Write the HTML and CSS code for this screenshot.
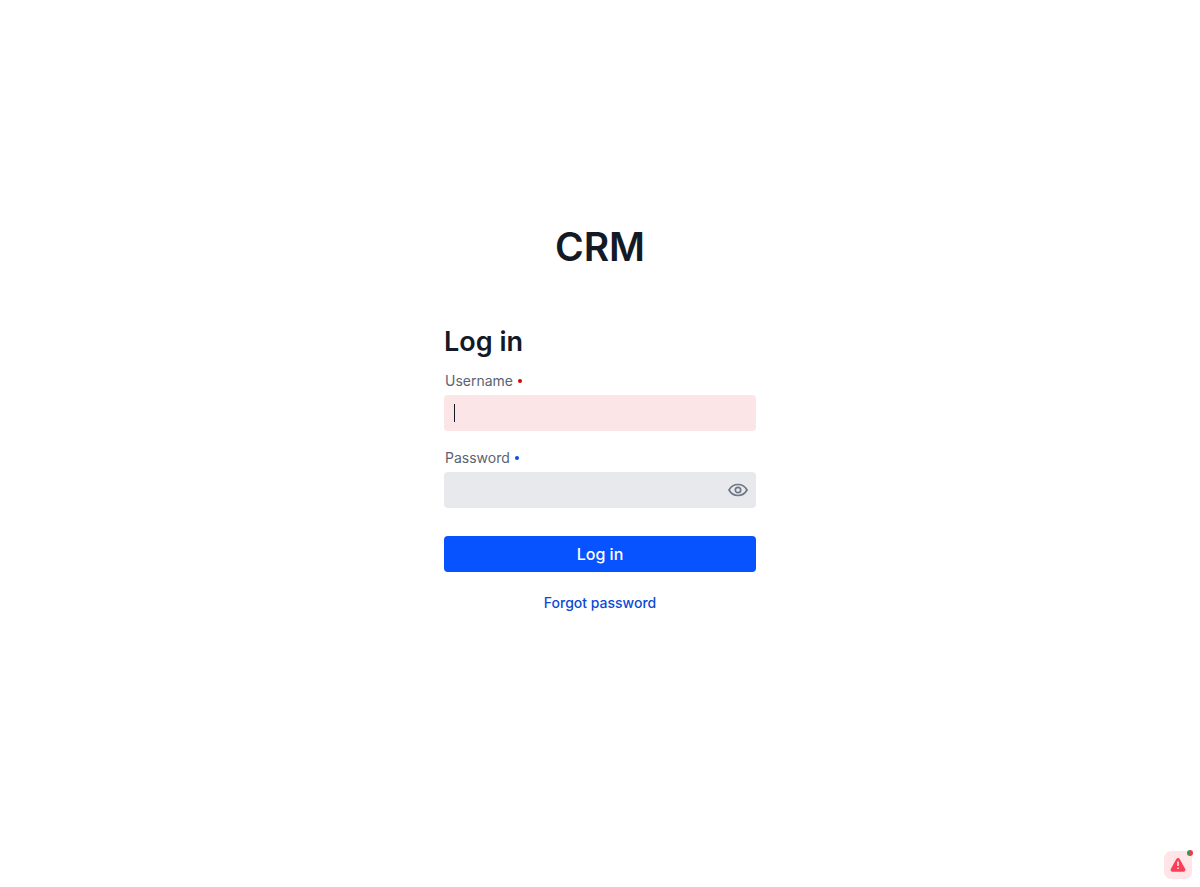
FILE: index.html
```html
<!DOCTYPE html>
<html lang="en">
<head>
<meta charset="utf-8">
<title>CRM</title>
<link rel="stylesheet" href="styles.css">
</head>
<body>
<main class="login">
  <h1 class="brand">CRM</h1>
  <form class="form">
    <h2 class="title">Log in</h2>
    <div class="field">
      <label class="label invalid" for="username">Username</label>
      <div class="control invalid"><span class="caret"></span><input class="input" id="username" type="text"></div>
    </div>
    <div class="field">
      <label class="label" for="password">Password</label>
      <div class="control">
        <input class="input" id="password" type="password">
        <button class="reveal" type="button" aria-label="Show password">
          <svg width="20" height="14" viewBox="0 0 20 14" fill="none" stroke="currentColor" stroke-width="1.7"><path d="M1 7C3 3.400 6.200 1.500 10 1.500S17 3.400 19 7C17 10.600 13.800 12.500 10 12.500S3 10.600 1 7Z"/><circle cx="10" cy="7" r="2.700"/></svg>
        </button>
      </div>
    </div>
    <button class="submit" type="button">Log in</button>
  </form>
  <a class="forgot" href="#">Forgot password</a>
</main>
<button class="alert" type="button" aria-label="Alerts">
  <svg width="16" height="16" viewBox="0 0 16 16"><path fill="#fb3f58" d="M8 1c.7 0 1.300.3 1.700 1l5.400 9.800c.7 1.400 0 2.900-1.600 2.900h-11C.9 14.700.2 13.200.9 11.800L6.300 2C6.700 1.300 7.300 1 8 1Z"/><path stroke="#ffe4e8" stroke-width="1.600" d="M8 4.500v4.500M8 10.500v1.600"/></svg>
  <span class="dot"></span>
</button>
</body>
</html>
```
FILE: styles.css
```css
* { box-sizing: border-box; }
body {
  margin: 0;
  min-height: 100vh;
  font-family: Inter, sans-serif;
  color: #131a26;
  background: #fff;
}
.login {
  display: flex;
  flex-direction: column;
  align-items: center;
  padding: 222px 16px 16px;
}
.brand { margin: 0; font-size: 39px; line-height: 50px; font-weight: 600; }
.form { width: 100%; max-width: 312px; margin-top: 52px; }
.title { margin: 0 0 10px; font-size: 27px; line-height: 36px; font-weight: 600; }
.field { margin-bottom: 16px; }
.label {
  display: flex;
  align-items: center;
  gap: 5px;
  height: 20px;
  margin: 0 1px 5px;
  font-size: 14px;
  font-weight: 400;
  color: #5b6370;
}
.label::after { content: ""; width: 4px; height: 4px; margin-top: 2px; border-radius: 50%; background: #0b4fe0; }
.label.invalid::after { background: #d00; }
.control {
  display: flex;
  align-items: center;
  height: 36px;
  padding: 0 8px 0 10px;
  border-radius: 4px;
  background: #e8e9ed;
}
.control.invalid { background: #fbe5e7; }
.caret { width: 1px; height: 18px; background: #131a26; }
.input { flex: 1; min-width: 0; border: 0; padding: 0; outline: 0; background: none; font: 16px Inter, sans-serif; }
.reveal { display: flex; border: 0; padding: 0; background: none; color: #6d7785; }
.submit {
  width: 100%;
  height: 36px;
  margin-top: 12px;
  border: 0;
  border-radius: 4px;
  background: #0653ff;
  color: #fff;
  font: 500 16px Inter, sans-serif;
}
.forgot { margin-top: 21px; font-size: 14px; line-height: 20px; font-weight: 500; color: #0b4bd4; text-decoration: none; }
.alert {
  position: fixed;
  right: 8px;
  bottom: 8px;
  display: flex;
  align-items: center;
  justify-content: center;
  width: 28px;
  height: 28px;
  padding: 0;
  border: 0;
  border-radius: 7px;
  background: #ffe4e8;
}
.dot { position: absolute; top: -1px; right: -1px; width: 6px; height: 6px; border-radius: 50%; background: linear-gradient(90deg, #22a447 50%, #f2384f 50%); }
```
